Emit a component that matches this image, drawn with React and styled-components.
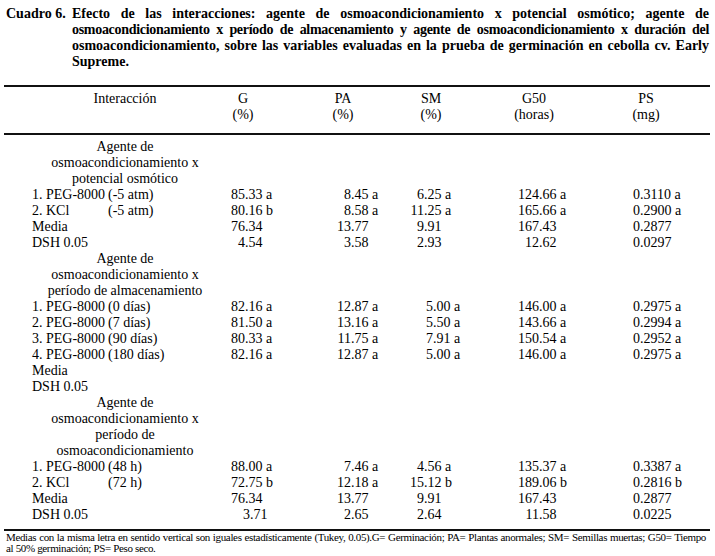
import React from "react";
import styled, { createGlobalStyle } from "styled-components";

const serif = `"Liberation Serif", "Times New Roman", serif`;

const Global = createGlobalStyle`
  html, body { margin: 0; padding: 0; background: #fff; font-family: ${serif}; }
`;

const Page = styled.div`
  width: 715px;
  height: 556px;
  box-sizing: border-box;
  padding: 6px 5px 0 4px;
  background: #fff;
  color: #000;
  font-family: ${serif};
  overflow: hidden;
`;

const Caption = styled.div`
  display: flex;
  margin-left: 2px;
  font-weight: bold;
  font-size: 14px;
  line-height: 16px;
`;

const CaptionLabel = styled.div`
  width: 66px;
  flex: none;
  white-space: nowrap;
`;

const CaptionText = styled.div`
  width: 637px;
  flex: none;
`;

const CaptionLine = styled.div`
  white-space: nowrap;
  text-align: ${(p) => (p.$last ? "left" : "justify")};
  text-align-last: ${(p) => (p.$last ? "left" : "justify")};
  letter-spacing: ${(p) => p.$ls || 0}px;
  word-spacing: ${(p) => p.$ws || 0}px;
`;

const Table = styled.div`
  width: 706px;
  margin-top: 15px;
  font-size: 14px;
  line-height: 16px;
`;

const Rule = styled.div`
  height: 2px;
  background: #111;
`;

const Head = styled.div`
  padding: 4px 0 10px;
`;

const Body = styled.div`
  padding: 4px 0 6px;
`;

const Row = styled.div`
  display: grid;
  grid-template-columns: 213px 106px 73px 115px 101px 1fr;
  height: 16px;
  white-space: nowrap;
`;

const HeadBox = styled.div`
  width: ${(p) => p.$w}px;
  margin-left: ${(p) => p.$ml || 0}px;
  text-align: center;
`;

const Label = styled.div`
  padding-left: 28px;
`;

const Lead = styled.span`
  display: inline-block;
  width: 76px;
`;

const Num = styled.div`
  display: flex;
  margin-left: ${(p) => p.$shift || 0}px;
`;

const IntPart = styled.span`
  width: 28px;
  text-align: right;
  flex: none;
`;

const FracPart = styled.span`
  white-space: pre;
`;

const Footnote = styled.div`
  margin-top: 1px;
  margin-left: 2px;
  width: 700px;
  font-size: 11px;
  line-height: 11px;
`;

const FootLine = styled.div`
  white-space: nowrap;
  letter-spacing: ${(p) => p.$ls || 0}px;
  text-align: ${(p) => (p.$justify ? "justify" : "left")};
  text-align-last: ${(p) => (p.$justify ? "justify" : "left")};
`;

const headWidths = [
  { w: 52, top: "G", bottom: "(%)" },
  { w: 40, top: "PA", bottom: "(%)" },
  { w: 70, top: "SM", bottom: "(%)" },
  { w: 46, top: "G50", bottom: "(horas)" },
  { w: 68, top: "PS", bottom: "(mg)" },
];

const sections = [
  {
    heading: ["Agente de", "osmoacondicionamiento x", "potencial osmótico"],
    shift: [0, 0, 0, 0, 0],
    rows: [
      { lead: "1. PEG-8000", tail: "(-5 atm)", v: ["85.33 a", "8.45 a", "6.25 a", "124.66 a", "0.3110 a"] },
      { lead: "2. KCl", tail: "(-5 atm)", v: ["80.16 b", "8.58 a", "11.25 a", "165.66 a", "0.2900 a"] },
      { lead: "Media", v: ["76.34", "13.77", "9.91", "167.43", "0.2877"] },
      { lead: "DSH 0.05", v: ["4.54", "3.58", "2.93", "12.62", "0.0297"] },
    ],
  },
  {
    heading: ["Agente de", "osmoacondicionamiento x", "período de almacenamiento"],
    shift: [0, 0, 9, 0, 0],
    rows: [
      { lead: "1. PEG-8000", tail: "(0 días)", v: ["82.16 a", "12.87 a", "5.00 a", "146.00 a", "0.2975 a"] },
      { lead: "2. PEG-8000", tail: "(7 días)", v: ["81.50 a", "13.16 a", "5.50 a", "143.66 a", "0.2994 a"] },
      { lead: "3. PEG-8000", tail: "(90 días)", v: ["80.33 a", "11.75 a", "7.91 a", "150.54 a", "0.2952 a"] },
      { lead: "4. PEG-8000", tail: "(180 días)", v: ["82.16 a", "12.87 a", "5.00 a", "146.00 a", "0.2975 a"] },
      { lead: "Media", v: [] },
      { lead: "DSH 0.05", v: [] },
    ],
  },
  {
    heading: ["Agente de", "osmoacondicionamiento x", "período de", "osmoacondicionamiento"],
    shift: [0, 0, 0, 0, 0],
    rows: [
      { lead: "1. PEG-8000", tail: "(48 h)", v: ["88.00 a", "7.46 a", "4.56 a", "135.37 a", "0.3387 a"] },
      { lead: "2. KCl", tail: "(72 h)", v: ["72.75 b", "12.18 a", "15.12 b", "189.06 b", "0.2816 b"] },
      { lead: "Media", v: ["76.34", "13.77", "9.91", "167.43", "0.2877"] },
      { lead: "DSH 0.05", v: ["3.71", "2.65", "2.64", "11.58", "0.0225"], shift: [5, 0, 0, 0, 0] },
    ],
  },
];

function Value({ text, shift }) {
  if (!text) return <div />;
  const i = text.indexOf(".");
  return (
    <Num $shift={shift}>
      <IntPart>{text.slice(0, i)}</IntPart>
      <FracPart>{text.slice(i)}</FracPart>
    </Num>
  );
}

export default function App() {
  return (
    <Page>
      <Global />
      <Caption>
        <CaptionLabel>Cuadro 6.</CaptionLabel>
        <CaptionText>
          <CaptionLine>
            Efecto de las interacciones: agente de osmoacondicionamiento x potencial osmótico; agente de
          </CaptionLine>
          <CaptionLine $ls={-0.3} $ws={-1}>
            osmoacondicionamiento x período de almacenamiento y agente de osmoacondicionamiento x duración del
          </CaptionLine>
          <CaptionLine>
            osmoacondicionamiento, sobre las variables evaluadas en la prueba de germinación en cebolla cv. Early
          </CaptionLine>
          <CaptionLine $last>Supreme.</CaptionLine>
        </CaptionText>
      </Caption>
      <Table>
        <Rule />
        <Head>
          <Row>
            <HeadBox $w={186} $ml={28}>Interacción</HeadBox>
            {headWidths.map((h) => (
              <HeadBox key={h.top} $w={h.w}>{h.top}</HeadBox>
            ))}
          </Row>
          <Row>
            <div />
            {headWidths.map((h) => (
              <HeadBox key={h.top} $w={h.w}>{h.bottom}</HeadBox>
            ))}
          </Row>
        </Head>
        <Rule />
        <Body>
          {sections.map((s, si) => (
            <React.Fragment key={si}>
              {s.heading.map((line, li) => (
                <Row key={"h" + li}>
                  <HeadBox $w={186} $ml={28}>{line}</HeadBox>
                </Row>
              ))}
              {s.rows.map((r, ri) => (
                <Row key={"r" + ri}>
                  <Label>
                    {r.tail ? (
                      <>
                        <Lead>{r.lead}</Lead>
                        {r.tail}
                      </>
                    ) : (
                      r.lead
                    )}
                  </Label>
                  {[0, 1, 2, 3, 4].map((c) => (
                    <Value
                      key={c}
                      text={r.v[c]}
                      shift={(r.shift ? r.shift[c] : 0) + s.shift[c]}
                    />
                  ))}
                </Row>
              ))}
            </React.Fragment>
          ))}
        </Body>
        <Rule />
      </Table>
      <Footnote>
        <FootLine $justify $ls={-0.35}>
          Medias con la misma letra en sentido vertical son iguales estadísticamente (Tukey, 0.05).G= Germinación; PA= Plantas anormales; SM= Semillas muertas; G50= Tiempo
        </FootLine>
        <FootLine $ls={-0.35}>al 50% germinación; PS= Peso seco.</FootLine>
      </Footnote>
    </Page>
  );
}
